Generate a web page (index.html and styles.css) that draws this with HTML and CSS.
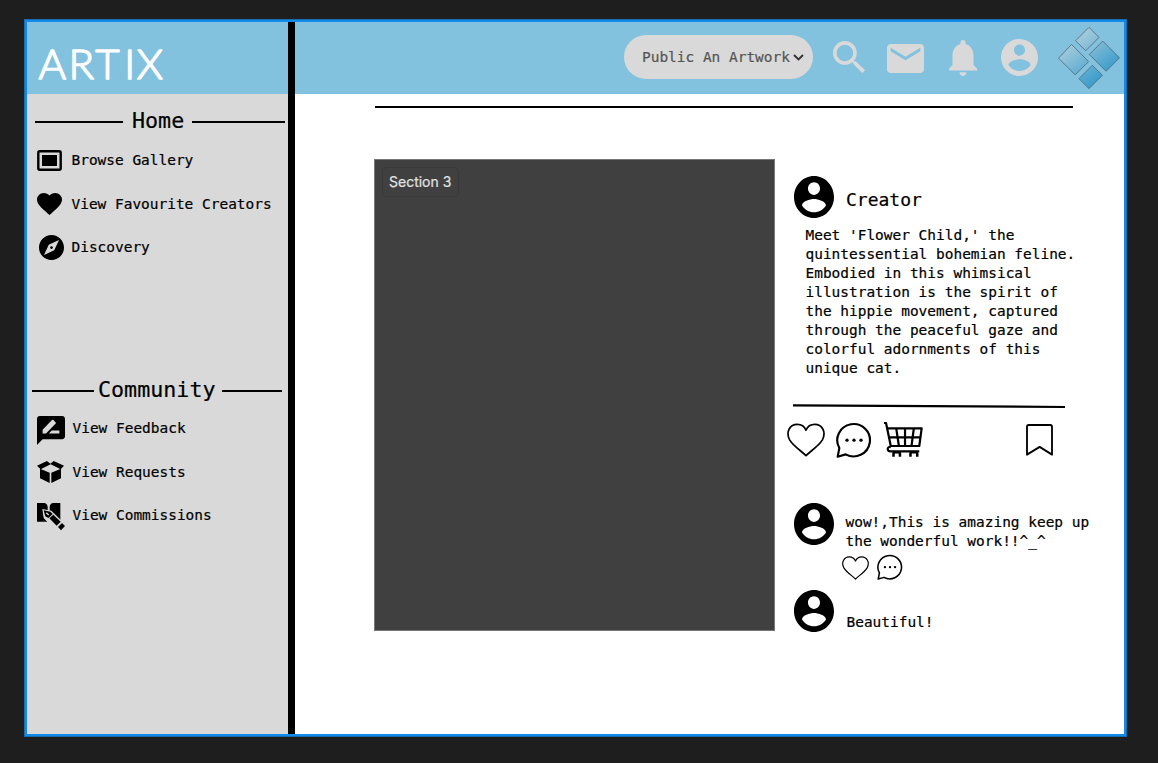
FILE: index.html
```html
<!DOCTYPE html>
<html lang="en">
<head>
<meta charset="utf-8">
<title>Artix</title>
<link rel="stylesheet" href="styles.css">
</head>
<body>
<svg class="defs" aria-hidden="true">
  <symbol id="account" viewBox="2 2 20 20" preserveAspectRatio="none"><path d="M12 2C6.48 2 2 6.48 2 12s4.480 10 10 10 10-4.480 10-10S17.520 2 12 2zm0 3c1.660 0 3 1.340 3 3s-1.340 3-3 3-3-1.340-3-3 1.340-3 3-3zm0 14.300c-2.500 0-4.710-1.280-6-3.220.03-1.990 4-3.080 6-3.080 1.990 0 5.970 1.090 6 3.080-1.290 1.940-3.500 3.220-6 3.220z"/></symbol>
  <symbol id="heart" viewBox="32 83 116 103" preserveAspectRatio="none"><path d="M90 182C77 168 52 154 40 134C27 109 42 87 63 87C77 87 86 95 90 105C94 95 103 87 117 87C138 87 153 109 140 134C128 154 103 168 90 182Z" fill="none" stroke="#000" stroke-width="5.200" stroke-linejoin="round"/></symbol>
  <symbol id="chat" viewBox="181 80 108 109" preserveAspectRatio="none"><path d="M186 185L191 159A49 49 0 1 1 210 178Z" fill="none" stroke="#000" stroke-width="6.500" stroke-linejoin="round"/><circle cx="214" cy="135" r="5"/><circle cx="235" cy="135" r="5"/><circle cx="256" cy="135" r="5"/></symbol>
</svg>

<div class="frame">
  <aside class="sidebar">
    <div class="brand">
      <svg class="wordmark" viewBox="0 0 140 50"><text y="40.500" x="0.500 30.500 57.300 86.300 98.800">ARTIX</text></svg>
    </div>
    <h2 class="heading heading-home"><span class="line"></span><span class="title">Home</span><span class="line"></span></h2>
    <ul class="menu">
      <li><span class="icon"><svg width="25" height="21" viewBox="0 0 25 21"><rect x="1.300" y="1.300" width="22.400" height="18.400" rx="1.500" fill="none" stroke="#000" stroke-width="2.400"/><rect x="5" y="5" width="15" height="11"/></svg></span>Browse Gallery</li>
      <li><span class="icon"><svg width="25" height="22" viewBox="2 3 20 18.350" preserveAspectRatio="none"><path d="M12 21.350l-1.450-1.320C5.400 15.360 2 12.280 2 8.500 2 5.420 4.420 3 7.500 3c1.740 0 3.410.81 4.500 2.090C13.090 3.810 14.760 3 16.500 3 19.580 3 22 5.420 22 8.500c0 3.780-3.400 6.860-8.550 11.540L12 21.350z"/></svg></span>View Favourite Creators</li>
      <li><span class="icon icon-compass"><svg width="25" height="25" viewBox="2 2 20 20"><path d="M12 10.900c-.61 0-1.100.49-1.100 1.100s.49 1.100 1.100 1.100c.61 0 1.100-.49 1.100-1.100s-.49-1.100-1.100-1.100zM12 2C6.480 2 2 6.480 2 12s4.480 10 10 10 10-4.480 10-10S17.520 2 12 2zm2.190 12.190L6 18l3.810-8.190L18 6l-3.810 8.190z"/></svg></span>Discovery</li>
    </ul>
    <h2 class="heading heading-community"><span class="line"></span><span class="title">Community</span><span class="line"></span></h2>
    <ul class="menu menu-community">
      <li><span class="icon"><svg class="feedback" width="28" height="29" viewBox="2 2 20 20" preserveAspectRatio="none"><path d="M20 2H4c-1.100 0-2 .9-2 2v18l4-4h14c1.100 0 2-.9 2-2V4c0-1.100-.9-2-2-2zM6 14v-2.470l6.880-6.880c.2-.2.510-.2.710 0l1.770 1.770c.2.200.2.510 0 .710L8.470 14H6zm12 0h-7.500l2-2H18v2z"/></svg></span>View Feedback</li>
      <li><span class="icon"><svg width="27" height="22" viewBox="38 269 81 66"><path d="M38 283L68 269L78 277L88 269L119 283L109 294L79 279L49 294Z"/><path d="M47 292L58 297L76 304V335L47 321ZM110 292L99 297L81 304V335L110 321Z"/><path d="M57 294L78 281L100 294L78 303Z" class="cut"/></svg></span>View Requests</li>
      <li><span class="icon"><svg class="commission" width="28" height="28" viewBox="36 398 84 84"><path d="M36 398H57Q66 398 68 409V454H36ZM74 454V409Q76 398 85 398H106V454Z"/><path d="M52 416L79 421L120 461L92 482L56 443Z" class="cut"/><path d="M56 420L76 424L83 431L70 443L61 438Z"/><path d="M64 427L71 434" class="nib"/><path d="M85 433L107 454L95 466L73 444ZM111 458L120 467L108 480L99 470Z"/></svg></span>View Commissions</li>
    </ul>
  </aside>
  <div class="divider"></div>
  <main class="main">
    <header class="topbar">
      <button class="publish">Public An Artwork<svg width="11" height="7" viewBox="0 0 11 7"><path d="M1 1L5.500 5.500L10 1" fill="none" stroke="#333" stroke-width="1.900"/></svg></button>
      <svg class="search" viewBox="3 3 17.490 17.490"><path d="M15.500 14h-.79l-.28-.27C15.410 12.590 16 11.110 16 9.500 16 5.910 13.090 3 9.500 3S3 5.910 3 9.500 5.910 16 9.500 16c1.610 0 3.090-.59 4.230-1.570l.27.28v.79l5 4.990L20.490 19l-4.990-5zm-6 0C7.010 14 5 11.990 5 9.500S7.010 5 9.500 5 14 7.010 14 9.500 11.990 14 9.500 14z"/></svg>
      <svg class="mail" viewBox="2 4 20 16" preserveAspectRatio="none"><path d="M20 4H4c-1.100 0-2 .9-2 2v12c0 1.100.9 2 2 2h16c1.100 0 2-.9 2-2V6c0-1.100-.9-2-2-2zm0 4l-8 5-8-5V6l8 5 8-5v2z"/></svg>
      <svg class="bell" viewBox="4 2.500 16 19.500" preserveAspectRatio="none"><path d="M12 22c1.100 0 2-.9 2-2h-4c0 1.100.89 2 2 2zm6-6v-5c0-3.070-1.640-5.640-4.500-6.320V4c0-.83-.67-1.500-1.500-1.500s-1.500.67-1.500 1.500v.68C7.630 5.360 6 7.920 6 11v5l-2 2v1h16v-1l-2-2z"/></svg>
      <svg class="profile"><use href="#account"/></svg>
      <svg class="logo" viewBox="563 51 184 185">
        <defs><linearGradient id="g" gradientUnits="userSpaceOnUse" x1="605" y1="85" x2="695" y2="200"><stop offset="0" stop-color="#a9cddc"/><stop offset="1" stop-color="#3b9dcb"/></linearGradient></defs>
        <path d="M655 52L685 82L645 122L615 92ZM603 103L654 154L614 194L564 144ZM696 93L746 143L706 183L656 133ZM665 165L695 195L655 235L625 205Z" fill="url(#g)" stroke="#536b77" stroke-width="2.500"/>
      </svg>
    </header>
    <div class="rule"></div>
    <div class="content">
      <section class="artwork"><span class="tag">Section 3</span></section>
      <section class="details">
        <div class="creator"><svg class="avatar"><use href="#account"/></svg><span class="name">Creator</span></div>
        <p class="description">Meet 'Flower Child,' the<br>quintessential bohemian feline.<br>Embodied in this whimsical<br>illustration is the spirit of<br>the hippie movement, captured<br>through the peaceful gaze and<br>colorful adornments of this<br>unique cat.</p>
        <svg class="separator" width="273" height="5" viewBox="0 0 273 5"><path d="M0 1.300L272 3" stroke="#000" stroke-width="2.200"/></svg>
        <div class="actions">
          <svg class="like"><use href="#heart"/></svg>
          <svg class="chat"><use href="#chat"/></svg>
          <svg class="cart" viewBox="327 83 115 105" preserveAspectRatio="none"><g fill="none" stroke="#000" stroke-width="6.500" stroke-linejoin="round"><path d="M327 86H333L347 155H431L438 102H336M341 129H434M363 102L371 155M389 102V155M415 102L408 155"/><path d="M347 157Q337 158 338 165Q339 171 346 171H431"/><path d="M355 187V178Q355 174 360 174H369Q374 174 374 178V187M405 187V178Q405 174 410 174H420Q425 174 425 178V187" stroke-width="7.500"/></g></svg>
          <svg class="bookmark" viewBox="752 89 81 95" preserveAspectRatio="none"><path d="M755 97Q755 92 760 92H825Q830 92 830 97V180L793 157L755 180Z" fill="none" stroke="#000" stroke-width="5.500" stroke-linejoin="round"/></svg>
        </div>
        <article class="comment">
          <svg class="avatar"><use href="#account"/></svg>
          <div class="comment-body">
            <p>wow!,This is amazing keep up<br>the wonderful work!!^_^</p>
            <div class="reactions"><svg class="like-small"><use href="#heart"/></svg><svg class="chat-small"><use href="#chat"/></svg></div>
          </div>
        </article>
        <article class="comment comment-last">
          <svg class="avatar"><use href="#account"/></svg>
          <div class="comment-body"><p>Beautiful!</p></div>
        </article>
      </section>
    </div>
  </main>
</div>
</body>
</html>
```

FILE: styles.css
```css
* { box-sizing: border-box; }
body {
  margin: 0;
  height: 763px;
  padding: 19px 31px 26px 24px;
  background: #1e1e1e;
  color: #000;
  font: 14.460px/19px "DejaVu Sans Mono", monospace;
  -webkit-text-stroke: 0.2px currentColor;
  overflow: hidden;
}
svg { display: block; flex: none; }
p, h2, ul { margin: 0; padding: 0; }
.defs { position: absolute; width: 0; height: 0; }
.frame {
  display: flex;
  width: 1103px;
  height: 718px;
  border: 3px solid #118ae9;
  outline: 1px solid #176dad;
  outline-offset: -1px;
  background: #fff;
}
.sidebar { width: 261px; background: #d9d9d9; white-space: nowrap; }
.divider { width: 7px; background: #000; }
.main { width: 829px; }
.brand { height: 72px; padding: 16px 0 0 11px; background: #82c2df; }
.wordmark { width: 140px; height: 50px; }
.wordmark text {
  font: 300 42px Lato, sans-serif;
  fill: #fff;
  stroke: #fff;
  stroke-width: 1.500px;
  stroke-linejoin: round;
}
.heading {
  display: flex;
  align-items: center;
  gap: 8px;
  height: 52px;
  font-size: 21.700px;
  font-weight: 400;
  line-height: 28px;
}
.title { padding-top: 1px; }
.line { flex: 1; height: 2px; margin-top: 3px; background: #000; }
.heading-home { padding: 0 3px 0 8px; }
.heading-home .line:first-child { flex: 0 0 88px; }
.heading-home .title { margin-left: 1px; }
.heading-community { margin-top: 94px; padding: 0 6px 0 5px; gap: 4px; }
.heading-community .line:first-child { flex: 0 0 62px; }
.heading-community .line { margin-top: 2px; }
.heading-community .line:last-child { margin-left: 2px; }
.menu { list-style: none; margin-top: -7px; padding-left: 10px; }
.menu li { display: flex; align-items: center; height: 43.600px; }
.icon { flex: 0 0 34.500px; }
.icon-compass { padding-left: 2px; }
.menu-community { margin-top: -9px; padding-left: 9.500px; }
.menu-community .icon { flex-basis: 36px; }
.feedback { margin-top: 4px; }
.commission { margin-top: 3px; }
.cut { fill: #d9d9d9; }
.nib { fill: none; stroke: #d9d9d9; stroke-width: 4; }
.topbar { display: flex; align-items: center; height: 72px; padding-left: 329px; background: #82c2df; fill: #d9d9d9; }
.publish {
  display: flex;
  align-items: center;
  gap: 3px;
  width: 189px;
  height: 44px;
  margin-top: -2px;
  padding: 0 0 0 18px;
  border: 0;
  border-radius: 22px;
  background: #d9d9d9;
  color: #555;
  font: inherit;
  white-space: nowrap;
}
.search { width: 32px; height: 32px; margin-left: 19.500px; margin-top: -2px; }
.mail { width: 37px; height: 29px; margin-left: 22.500px; }
.bell { width: 28px; height: 36px; margin-left: 24.500px; }
.profile { width: 37px; height: 37px; margin-left: 24px; margin-top: -1px; }
.logo { width: 62px; height: 62px; margin-left: 20px; }
.rule { width: 698px; height: 2px; margin: 12px 0 51px 80px; background: #000; }
.content { display: flex; padding-left: 79px; }
.artwork { width: 401px; height: 472px; padding: 8px; border: 1px solid #777; background: #404040; }
.tag {
  display: inline-block;
  height: 30px;
  margin-left: -1px;
  margin-top: -1px;
  padding: 0 7px 0 6px;
  border: 1px solid #393939;
  border-radius: 5px;
  color: #e2e2e2;
  font: 400 14px/27px Inter, sans-serif;
}
.details { width: 330px; padding: 17px 0 0 18.500px; white-space: nowrap; }
.avatar { width: 40px; height: 42px; }
.creator { display: flex; align-items: center; gap: 12.500px; }
.name { padding-top: 4px; font-size: 18px; }
.description { margin: 8.300px 0 0 12px; line-height: 18.950px; }
.separator { margin: 25.700px 0 0 -1px; }
.actions { display: flex; align-items: center; height: 36px; margin: 13px 0 45px -7px; }
.like { width: 38px; height: 34px; }
.chat { width: 36px; height: 36px; margin-left: 11px; }
.cart { width: 39px; height: 35px; margin-left: 12.500px; }
.bookmark { width: 27px; height: 32px; margin-left: 103px; }
.comment { display: flex; gap: 12px; height: 87px; }
.comment-body { padding-top: 10px; }
.reactions { display: flex; align-items: flex-end; gap: 8.500px; height: 26px; margin: 3px 0 0 -4px; }
.like-small { width: 27px; height: 24px; }
.chat-small { width: 26px; height: 26px; }
.comment-last .comment-body { padding: 23px 0 0 1px; }
```
